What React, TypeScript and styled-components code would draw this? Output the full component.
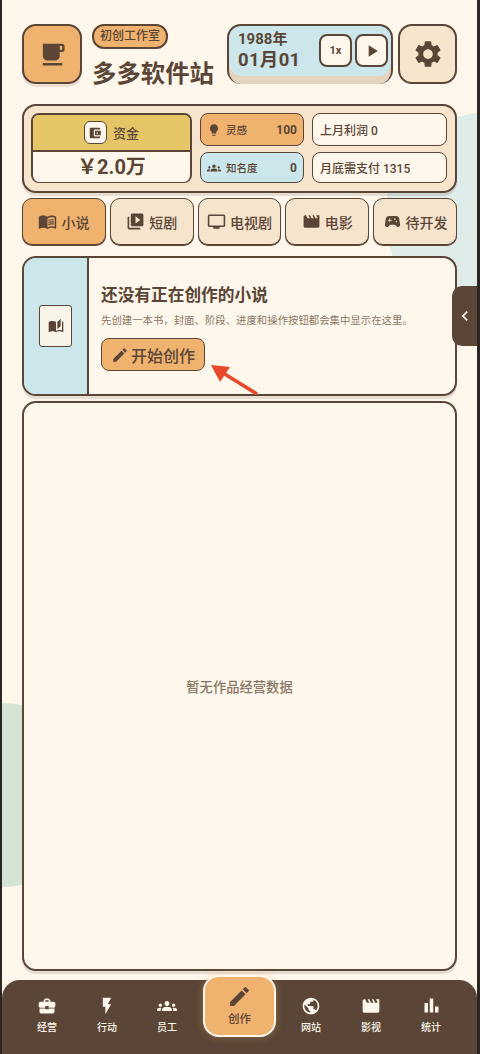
import React from "react";
import styled, { createGlobalStyle } from "styled-components";
import {
  MdLocalCafe, MdSettings, MdPlayArrow, MdAccountBalanceWallet, MdLightbulb, MdGroups, MdMenuBook,
  MdVideoLibrary, MdOutlineTv, MdMovie, MdSportsEsports, MdEdit, MdBusinessCenter, MdFlashOn,
  MdPublic, MdBarChart, MdChevronLeft, MdAutoStories,
} from "react-icons/md";

const INK = "#5a4536";
const CREAM = "#fff7eb";
const ORANGE = "#f0b26f";
const SAND = "#f6e4cd";
const BLUE = "#cbe7ec";
const FONT = `"Roboto", "Noto Sans CJK SC", sans-serif`;

const Global = createGlobalStyle`
  html, body { margin: 0; padding: 0; background: ${CREAM}; }
  #root { width: 480px; height: 1054px; overflow: hidden; }
  * { box-sizing: border-box; }
`;

const Page = styled.div`
  position: relative; width: 480px; height: 1054px; overflow: hidden; background: ${CREAM};
  font-family: ${FONT}; color: ${INK}; display: flex; flex-direction: column;
  border-left: 2px solid #2b2623; border-right: 3px solid #2b2623;
  padding: 24px 20px 0 20px;
`;
const BlobBlue = styled.div`
  position: absolute; right: -118px; top: 112px; width: 210px; height: 210px; border-radius: 50%; background: #dfecea;
`;
const BlobGreen = styled.div`
  position: absolute; left: -92px; top: 703px; width: 184px; height: 184px; border-radius: 50%; background: #d5e3d2;
`;
const Content = styled.div`position: relative; display: flex; flex-direction: column; flex: 1; min-height: 0;`;
const Header = styled.div`display: flex; align-items: flex-start; height: 62px;`;
const LogoBox = styled.div`
  width: 60px; height: 60px; border-radius: 14px; background: ${ORANGE}; border: 2px solid ${INK};
  box-shadow: 0 3px 0 rgba(90,69,54,.14); display: flex; align-items: center; justify-content: center; font-size: 29px;
`;
const TitleWrap = styled.div`margin-left: 10px; display: flex; flex-direction: column; align-items: flex-start; width: 135px;`;
const Badge = styled.div`
  height: 25px; padding: 0 6px; border-radius: 12px; background: ${ORANGE}; border: 2px solid ${INK};
  font-size: 12px; line-height: 21px; font-weight: 500; white-space: nowrap;
`;
const Title = styled.div`font-size: 24.4px; line-height: 32px; font-weight: 700; margin-top: 9px; white-space: nowrap;`;
const DateBox = styled.div`
  width: 166px; height: 60px; border-radius: 14px; background: ${BLUE}; border: 2px solid ${INK}; border-bottom: 0;
  box-shadow: inset 0 -8px 0 #e6d3bb; display: flex; align-items: flex-start; padding: 3px 0 0 9px;
`;
const DateText = styled.div`width: 81px; font-weight: 700;`;
const Year = styled.div`font-size: 15px; line-height: 20px;`;
const Day = styled.div`font-size: 18.5px; line-height: 22px; letter-spacing: .3px;`;
const SmallBtn = styled.div`
  width: 33px; height: 33px; border-radius: 8px; background: ${CREAM}; border: 2px solid ${INK}; margin: 5px 3px 0 0;
  display: flex; align-items: center; justify-content: center; font-size: 11px; font-weight: 700;
  svg { font-size: 20px; }
`;
const GearBox = styled.div`
  width: 59px; height: 60px; border-radius: 14px; background: ${SAND}; border: 2px solid ${INK}; margin-left: 5px;
  display: flex; align-items: center; justify-content: center; font-size: 32px;
`;
const StatsPanel = styled.div`
  margin-top: 18px; height: 89px; border-radius: 14px; background: ${SAND}; border: 2px solid ${INK};
  box-shadow: 0 3px 0 rgba(90,69,54,.15); padding: 7px 8px 7px 7px; display: grid;
  grid-template-columns: 161px 104px 135px; grid-template-rows: 33px 31px; gap: 6px 8px;
`;
const Funds = styled.div`
  grid-row: span 2; border-radius: 8px; border: 2px solid ${INK}; border-bottom-width: 1px; overflow: hidden; display: flex; flex-direction: column; background: ${CREAM};
`;
const FundsHead = styled.div`
  height: 37px; flex: none; background: #e6c566; border-bottom: 2px solid ${INK}; display: flex; align-items: center; justify-content: center; gap: 6px;
  font-size: 13px; font-weight: 500;
`;
const WalletIcon = styled.div`
  width: 23px; height: 23px; border-radius: 6px; background: ${CREAM}; border: 1px solid ${INK}; display: flex; align-items: center; justify-content: center; font-size: 14px;
`;
const FundsValue = styled.div`flex: 1; display: flex; align-items: center; justify-content: center; font-size: 20px; line-height: 24px; font-weight: 700;`;
const Stat = styled.div<{ $bg: string }>`
  border-radius: 8px; background: ${(p) => p.$bg}; border: 1.5px solid ${INK}; display: flex; align-items: center; padding: 0 6px; font-size: 10.5px; font-weight: 500; gap: 5px;
  svg { font-size: 14px; flex: none; }
`;
const StatValue = styled.span`margin-left: auto; font-size: 12px; font-weight: 700;`;
const Note = styled.div`
  border-radius: 8px; background: ${CREAM}; border: 1.5px solid ${INK}; display: flex; align-items: center; padding: 0 7px;
  font-size: 12px; font-weight: 500; white-space: pre;
`;
const Tabs = styled.div`margin-top: 5px; display: flex; gap: 4px;`;
const Tab = styled.div<{ $active?: boolean }>`
  flex: 1; height: 47px; border-radius: 10px; background: ${(p) => (p.$active ? ORANGE : SAND)}; border: 1.5px solid ${INK};
  box-shadow: 0 1px 0 ${INK}; display: flex; align-items: center; justify-content: center; gap: 4px; font-size: 14px; font-weight: 500;
  svg { font-size: 19px; flex: none; }
`;
const EmptyCard = styled.div`
  margin-top: 11px; height: 140px; border-radius: 14px; background: ${CREAM}; border: 2px solid ${INK}; overflow: hidden; display: flex;
  box-shadow: 0 3px 0 rgba(90,69,54,.15); flex: none;
`;
const CardAside = styled.div`
  width: 65px; flex: none; background: ${BLUE}; border-right: 2px solid ${INK}; display: flex; align-items: center; justify-content: center;
`;
const BookBox = styled.div`
  width: 33px; height: 42px; border-radius: 3px; background: #f8f4ea; border: 1.5px solid ${INK}; display: flex; align-items: center; justify-content: center; font-size: 16px;
`;
const CardBody = styled.div`padding: 28px 0 0 12px; display: flex; flex-direction: column; align-items: flex-start;`;
const CardTitle = styled.div`font-size: 16.7px; line-height: 20px; font-weight: 700; white-space: nowrap;`;
const CardText = styled.div`font-size: 10.4px; line-height: 14px; margin-top: 8px; color: #8a7767; white-space: nowrap;`;
const StartBtn = styled.div`
  margin-top: 10px; width: 104px; height: 33px; border-radius: 8px; background: ${ORANGE}; border: 1.5px solid ${INK};
  display: flex; align-items: center; justify-content: center; gap: 2px; font-size: 16px; font-weight: 500; white-space: nowrap; svg { font-size: 18px; flex: none; }
`;
const Arrow = styled.svg`position: absolute; left: 203px; top: 360px; width: 56px; height: 38px;`;
const DataPanel = styled.div`
  margin-top: 5px; height: 570px; flex: none; border-radius: 14px; background: ${CREAM}; border: 2px solid ${INK}; box-shadow: 0 3px 0 rgba(90,69,54,.15);
  display: flex; align-items: center; justify-content: center; font-size: 13.3px; color: #8a7767; font-weight: 500;
`;
const SideTab = styled.div`
  position: absolute; right: 0; top: 286px; width: 25px; height: 60px; border-radius: 10px 0 0 10px; background: ${INK}; color: ${CREAM};
  display: flex; align-items: center; justify-content: center; font-size: 20px;
`;
const NavBar = styled.div`
  position: absolute; left: 0; right: 0; bottom: 0; height: 74px; border-radius: 18px 18px 0 0; background: ${INK};
  display: grid; grid-template-columns: 60px 60px 60px 84px 60px 60px 60px; padding: 0 0 0 15px; justify-content: start;
`;
const NavItem = styled.div`
  display: flex; flex-direction: column; align-items: center; padding-top: 16px; color: ${CREAM}; font-size: 10px; line-height: 14px; font-weight: 500;
  svg { font-size: 20px; display: block; margin-bottom: 5px; }
`;
const NavActive = styled.div`
  position: relative; top: -5px; width: 73px; height: 62px; margin-left: 6px; border-radius: 16px; background: ${ORANGE}; border: 2px solid ${CREAM}; color: ${INK};
  box-shadow: 0 0 8px rgba(240,178,111,.35); display: flex; flex-direction: column; align-items: center; padding-top: 7px; font-size: 11.5px; line-height: 16px; font-weight: 500;
  svg { font-size: 25px; display: block; margin-bottom: 2px; }
`;
const SmallChart = styled(MdBarChart)`
  && { font-size: 21px; margin: -1px 0 5px; }
`;

const tabs = [
  { label: "小说", icon: <MdMenuBook />, active: true },
  { label: "短剧", icon: <MdVideoLibrary /> },
  { label: "电视剧", icon: <MdOutlineTv /> },
  { label: "电影", icon: <MdMovie /> },
  { label: "待开发", icon: <MdSportsEsports /> },
];
const navLeft = [
  { label: "经营", icon: <MdBusinessCenter /> },
  { label: "行动", icon: <MdFlashOn /> },
  { label: "员工", icon: <MdGroups /> },
];
const navRight = [
  { label: "网站", icon: <MdPublic /> },
  { label: "影视", icon: <MdMovie /> },
  { label: "统计", icon: <SmallChart /> },
];

export default function App() {
  return (
    <Page>
      <Global />
      <BlobBlue />
      <BlobGreen />
      <Content>
        <Header>
          <LogoBox><MdLocalCafe /></LogoBox>
          <TitleWrap>
            <Badge>初创工作室</Badge>
            <Title>多多软件站</Title>
          </TitleWrap>
          <DateBox>
            <DateText>
              <Year>1988年</Year>
              <Day>01月01</Day>
            </DateText>
            <SmallBtn>1x</SmallBtn>
            <SmallBtn><MdPlayArrow /></SmallBtn>
          </DateBox>
          <GearBox><MdSettings /></GearBox>
        </Header>
        <StatsPanel>
          <Funds>
            <FundsHead><WalletIcon><MdAccountBalanceWallet /></WalletIcon>资金</FundsHead>
            <FundsValue>￥2.0万</FundsValue>
          </Funds>
          <Stat $bg={ORANGE}><MdLightbulb />灵感<StatValue>100</StatValue></Stat>
          <Note>上月利润 0</Note>
          <Stat $bg={BLUE}><MdGroups />知名度<StatValue>0</StatValue></Stat>
          <Note>月底需支付 1315</Note>
        </StatsPanel>
        <Tabs>
          {tabs.map((t) => (
            <Tab key={t.label} $active={t.active}>{t.icon}{t.label}</Tab>
          ))}
        </Tabs>
        <EmptyCard>
          <CardAside><BookBox><MdAutoStories /></BookBox></CardAside>
          <CardBody>
            <CardTitle>还没有正在创作的小说</CardTitle>
            <CardText>先创建一本书，封面、阶段、进度和操作按钮都会集中显示在这里。</CardText>
            <StartBtn><MdEdit />开始创作</StartBtn>
          </CardBody>
        </EmptyCard>
        <DataPanel>暂无作品经营数据</DataPanel>
      </Content>
      <Arrow viewBox="0 0 56 38">
        <path d="M52 34 L18 13" stroke="#e8492c" strokeWidth="3.5" fill="none" />
        <path d="M6 5 L25 7 L15 22 Z" fill="#e8492c" />
      </Arrow>
      <SideTab><MdChevronLeft /></SideTab>
      <NavBar>
        {navLeft.map((n) => <NavItem key={n.label}>{n.icon}{n.label}</NavItem>)}
        <NavActive><MdEdit />创作</NavActive>
        {navRight.map((n) => <NavItem key={n.label}>{n.icon}{n.label}</NavItem>)}
      </NavBar>
    </Page>
  );
}
